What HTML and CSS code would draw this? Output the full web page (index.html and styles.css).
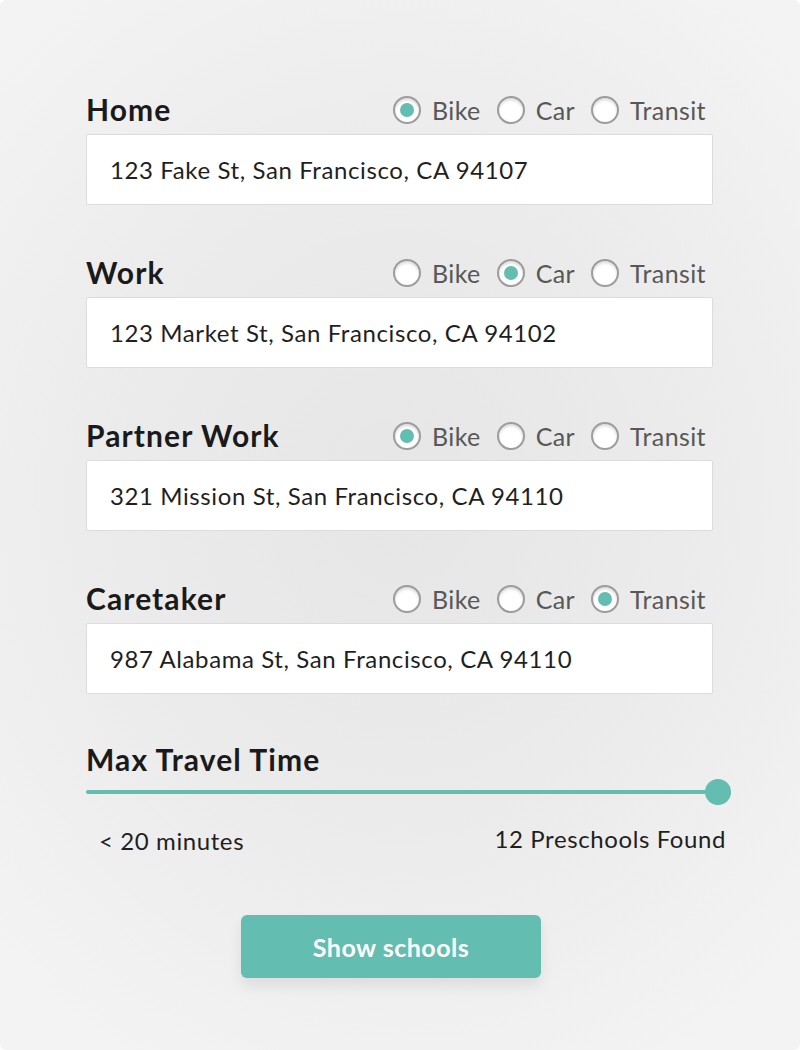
FILE: index.html
```html
<!DOCTYPE html>
<html>
<head>
<meta charset="utf-8">
<link rel="stylesheet" href="styles.css">
</head>
<body>
<div class="page">
  <div class="form">
    <section class="place">
      <div class="place-head">
        <h2 class="place-title">Home</h2>
        <div class="modes">
          <span class="mode"><span class="radio on"></span><span class="mode-label">Bike</span></span>
          <span class="mode"><span class="radio"></span><span class="mode-label">Car</span></span>
          <span class="mode"><span class="radio"></span><span class="mode-label">Transit</span></span>
        </div>
      </div>
      <div class="address">123 Fake St, San Francisco, CA 94107</div>
    </section>
    <section class="place">
      <div class="place-head">
        <h2 class="place-title">Work</h2>
        <div class="modes">
          <span class="mode"><span class="radio"></span><span class="mode-label">Bike</span></span>
          <span class="mode"><span class="radio on"></span><span class="mode-label">Car</span></span>
          <span class="mode"><span class="radio"></span><span class="mode-label">Transit</span></span>
        </div>
      </div>
      <div class="address">123 Market St, San Francisco, CA 94102</div>
    </section>
    <section class="place">
      <div class="place-head">
        <h2 class="place-title">Partner Work</h2>
        <div class="modes">
          <span class="mode"><span class="radio on"></span><span class="mode-label">Bike</span></span>
          <span class="mode"><span class="radio"></span><span class="mode-label">Car</span></span>
          <span class="mode"><span class="radio"></span><span class="mode-label">Transit</span></span>
        </div>
      </div>
      <div class="address">321 Mission St, San Francisco, CA 94110</div>
    </section>
    <section class="place">
      <div class="place-head">
        <h2 class="place-title">Caretaker</h2>
        <div class="modes">
          <span class="mode"><span class="radio"></span><span class="mode-label">Bike</span></span>
          <span class="mode"><span class="radio"></span><span class="mode-label">Car</span></span>
          <span class="mode"><span class="radio on"></span><span class="mode-label">Transit</span></span>
        </div>
      </div>
      <div class="address">987 Alabama St, San Francisco, CA 94110</div>
    </section>
    <section class="travel">
      <div class="place-head">
        <h2 class="place-title">Max Travel Time</h2>
      </div>
      <div class="slider">
        <div class="track"></div>
        <div class="thumb"></div>
      </div>
      <div class="travel-info">
        <span class="minutes">&lt; 20 minutes</span>
        <span class="found">12 Preschools Found</span>
      </div>
    </section>
    <div class="actions">
      <button class="show-btn">Show schools</button>
    </div>
  </div>
</div>
</body>
</html>
```

FILE: styles.css
```css
html, body {
  margin: 0;
  padding: 0;
}
body {
  width: 800px;
  height: 1050px;
  font-family: "Lato", "Noto Sans", sans-serif;
  color: #1c1c1c;
}
.page {
  box-sizing: border-box;
  width: 800px;
  height: 1050px;
  border-radius: 6px;
  background: radial-gradient(ellipse 70% 60% at 50% 48%, #e6e6e6 0%, #ebebeb 50%, #f3f3f3 100%);
  padding: 91px 87px 0 86px;
}
.form {
  display: flex;
  flex-direction: column;
}
.place {
  display: flex;
  flex-direction: column;
  gap: 7px;
  margin-bottom: 49px;
}
.place-head {
  height: 36px;
  display: flex;
  align-items: center;
  justify-content: space-between;
}
.place-title {
  margin: 0;
  font-size: 30px;
  font-weight: 700;
  color: #1a1a1a;
  letter-spacing: 1.1px;
}
.modes {
  display: flex;
  align-items: center;
  margin-right: 7px;
  padding-top: 2px;
}
.mode {
  display: flex;
  align-items: center;
  margin-left: 16px;
}
.radio {
  box-sizing: border-box;
  width: 28px;
  height: 28px;
  border-radius: 50%;
  border: 2px solid #9c9c9c;
  background: #fff;
  box-shadow: inset 0 2px 3px rgba(0,0,0,0.15);
  display: flex;
  align-items: center;
  justify-content: center;
}
.radio.on::after {
  content: "";
  width: 14px;
  height: 14px;
  border-radius: 50%;
  background: #63bdb0;
}
.mode-label {
  margin-left: 11px;
  font-size: 25px;
  color: #585858;
  letter-spacing: 0.4px;
}
.address {
  box-sizing: border-box;
  height: 71px;
  background: #fff;
  border: 1px solid #dcdcdc;
  border-radius: 2px;
  padding: 0 23px;
  display: flex;
  align-items: center;
  font-size: 24px;
  color: #1f1f1f;
  letter-spacing: 0.6px;
}
.travel {
  display: flex;
  flex-direction: column;
  margin-top: -2px;
}
.slider {
  position: relative;
  height: 30px;
  margin-right: -18px;
  display: flex;
  align-items: center;
}
.track {
  flex: 1;
  height: 4px;
  border-radius: 2px;
  background: #63bdb0;
}
.thumb {
  position: absolute;
  right: 0;
  top: 2px;
  width: 26px;
  height: 26px;
  border-radius: 50%;
  background: #63bdb0;
}
.travel-info {
  display: flex;
  justify-content: space-between;
  align-items: center;
  margin-top: 16px;
  margin-right: -13px;
  padding-left: 13px;
  height: 30px;
  font-size: 24px;
  color: #1f1f1f;
  letter-spacing: 0.6px;
}
.minutes {
  position: relative;
  top: 2px;
}
.actions {
  margin-top: 62px;
  padding-left: 155px;
}
.show-btn {
  width: 300px;
  height: 63px;
  border: none;
  border-radius: 6px;
  background: #63bdb0;
  color: #fff;
  font-family: "Lato", "Noto Sans", sans-serif;
  font-size: 25px;
  font-weight: 700;
  letter-spacing: 0.5px;
  box-shadow: 0 8px 14px rgba(0,0,0,0.08);
}
```
